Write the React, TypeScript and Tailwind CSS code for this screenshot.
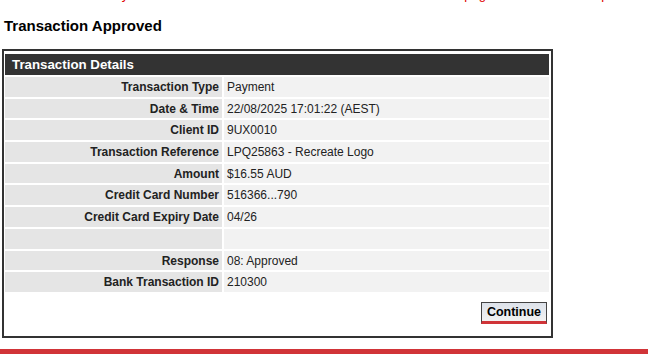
import React from "react";

const rows: [string, string][] = [
  ["Transaction Type", "Payment"],
  ["Date & Time", "22/08/2025 17:01:22 (AEST)"],
  ["Client ID", "9UX0010"],
  ["Transaction Reference", "LPQ25863 - Recreate Logo"],
  ["Amount", "$16.55 AUD"],
  ["Credit Card Number", "516366...790"],
  ["Credit Card Expiry Date", "04/26"],
  ["", ""],
  ["Response", "08: Approved"],
  ["Bank Transaction ID", "210300"],
];

export default function App() {
  return (
    <div
      className="w-[648px] h-[355px] bg-white overflow-hidden relative text-black"
      style={{ fontFamily: '"Liberation Sans", Arial, sans-serif' }}
    >
      <div className="h-[5px] overflow-hidden">
        <div className="mt-[-13px] pl-[4px] flex text-[13px] leading-[16px] text-[#e00000] whitespace-pre">
          <span>The order total is fully</span>
          <span className="w-[336px] shrink-0 overflow-hidden"> settled and the merchant has been notified. Print this </span>
          <span>page</span>
          <span className="w-[108px] shrink-0 overflow-hidden"> as a record then click Continue to </span>
          <span>proceed.</span>
        </div>
      </div>
      <h1 className="pl-[4px] mt-[12px] text-[15px] leading-[18px] font-bold">Transaction Approved</h1>
      <div className="ml-[2px] mt-[14px] w-[551px] h-[289px] border-2 border-[#333333] pt-[3px] pl-[1px] pr-[2px] flex flex-col">
        <div className="h-[21px] bg-[#333333] text-white font-bold text-[13.3px] leading-[21px] pl-[7px]">
          Transaction Details
        </div>
        <div className="mt-[2px] grid grid-cols-[217px_1fr] gap-x-[2px] gap-y-[2px]">
          {rows.map(([k, v], i) => (
            <React.Fragment key={i}>
              <div className="h-[19.7px] bg-[#e5e5e5] text-right font-bold text-[12px] leading-[20px] pr-[3px] text-[#222]">
                {k}
              </div>
              <div className="h-[19.7px] bg-[#f2f2f2] text-[12px] leading-[20px] pl-[3px] text-[#222]">
                {v}
              </div>
            </React.Fragment>
          ))}
        </div>
        <div className="flex justify-end mt-[10px] pr-[2px]">
          <button className="w-[66px] h-[22px] border border-[#444] border-b-[3px] border-b-[#d03438] bg-gradient-to-b from-[#dde2ea] to-[#f2f2f2] text-[12.5px] font-bold leading-[16px] text-black">
            Continue
          </button>
        </div>
      </div>
      <div className="absolute left-0 right-0 top-[349px] h-[5px] bg-[#d13438]" />
    </div>
  );
}
